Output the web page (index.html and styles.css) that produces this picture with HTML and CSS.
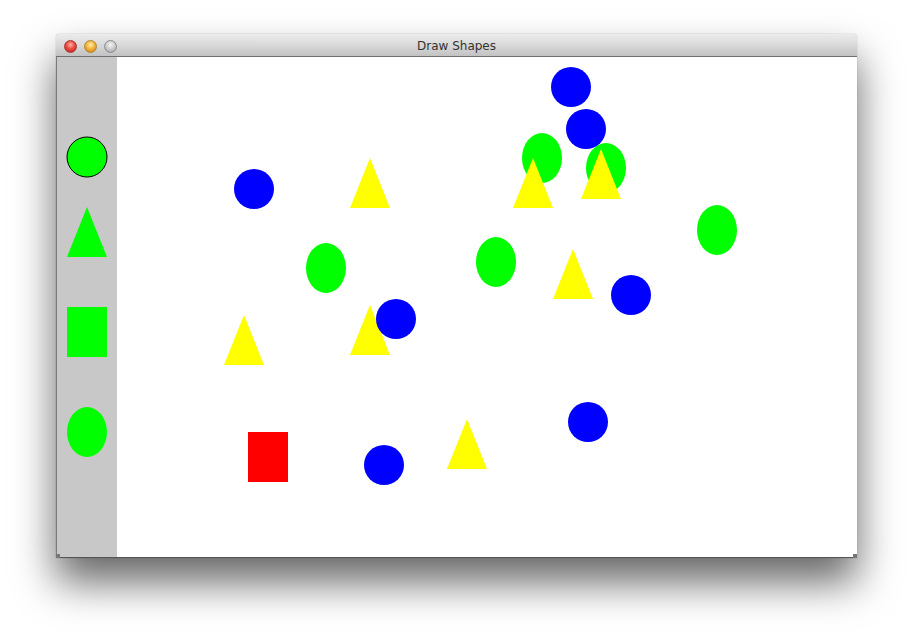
FILE: index.html
```html
<!DOCTYPE html>
<html>
<head>
<meta charset="utf-8">
<title>Draw Shapes</title>
<link rel="stylesheet" href="styles.css">
</head>
<body>
<div class="window">
  <div class="titlebar">
    <div class="lights">
      <span class="light red"></span>
      <span class="light yellow"></span>
      <span class="light gray"></span>
    </div>
    <div class="title">Draw Shapes</div>
  </div>
  <div class="content">
    <div class="sidebar">
      <svg class="palette" width="60" height="500" viewBox="0 0 60 500">
        <circle cx="30" cy="100" r="20" fill="#00ff00" stroke="#000" stroke-width="1"/>
        <polygon points="30,150 10,200 50,200" fill="#00ff00"/>
        <rect x="10" y="250" width="40" height="50" fill="#00ff00"/>
        <ellipse cx="30" cy="375" rx="20" ry="25" fill="#00ff00"/>
      </svg>
    </div>
    <div class="canvas">
      <svg width="740" height="500" viewBox="0 0 740 500">
        <g fill="#00ff00">
          <ellipse cx="425" cy="101" rx="20" ry="25"/>
          <ellipse cx="489" cy="111" rx="20" ry="25"/>
          <ellipse cx="209" cy="211" rx="20" ry="25"/>
          <ellipse cx="379" cy="205" rx="20" ry="25"/>
          <ellipse cx="600" cy="173" rx="20" ry="25"/>
        </g>
        <rect x="131" y="375" width="40" height="50" fill="#ff0000"/>
        <g fill="#ffff00">
          <polygon points="416,101 396,151 436,151"/>
          <polygon points="484,92 464,142 504,142"/>
          <polygon points="253,101 233,151 273,151"/>
          <polygon points="456,192 436,242 476,242"/>
          <polygon points="127,258 107,308 147,308"/>
          <polygon points="253,248 233,298 273,298"/>
          <polygon points="350,362 330,412 370,412"/>
        </g>
        <g fill="#0000ff">
          <circle cx="454" cy="30" r="20"/>
          <circle cx="469" cy="72" r="20"/>
          <circle cx="137" cy="132" r="20"/>
          <circle cx="279" cy="262" r="20"/>
          <circle cx="514" cy="238" r="20"/>
          <circle cx="267" cy="408" r="20"/>
          <circle cx="471" cy="365" r="20"/>
        </g>
      </svg>
    </div>
    <span class="corner left"></span>
    <span class="corner right"></span>
  </div>
</div>
</body>
</html>
```
FILE: styles.css
```css
html, body {
  margin: 0;
  padding: 0;
  background: #ffffff;
  width: 914px;
  height: 636px;
  overflow: hidden;
}
body {
  padding: 34px 0 0 56px;
  box-sizing: border-box;
}
.window {
  width: 801px;
  display: flex;
  flex-direction: column;
  border-radius: 4px 4px 0 0;
  box-shadow: 0 24px 42px rgba(0,0,0,0.6), 0 0 1px rgba(0,0,0,0.5);
  background: #fff;
}
.titlebar {
  position: relative;
  height: 23px;
  box-sizing: border-box;
  border-bottom: 1px solid #6f6f6f;
  border-radius: 4px 4px 0 0;
  background: linear-gradient(to bottom, #ececec 0%, #d9d9d9 50%, #c2c2c2 100%);
  display: flex;
  align-items: center;
  justify-content: center;
}
.lights {
  position: absolute;
  left: 8px;
  top: 6px;
  display: flex;
  gap: 7px;
}
.light {
  width: 13px;
  height: 13px;
  border-radius: 50%;
  box-sizing: border-box;
}
.light.red {
  background: radial-gradient(circle at 50% 35%, #ffb2a8 0%, #ee4a42 45%, #b31f1a 100%);
  border: 1px solid #a33a33;
}
.light.yellow {
  background: radial-gradient(circle at 50% 35%, #fff0b0 0%, #f6b53b 45%, #c27a10 100%);
  border: 1px solid #b2852d;
}
.light.gray {
  background: radial-gradient(circle at 50% 35%, #f4f4f4 0%, #cfcfcf 45%, #9a9a9a 100%);
  border: 1px solid #8e8e8e;
}
.title {
  font-family: "DejaVu Sans", "Liberation Sans", sans-serif;
  font-size: 12px;
  color: #333;
  line-height: 22px;
  padding-top: 1px;
}
.content {
  position: relative;
  display: flex;
  height: 501px;
  box-sizing: border-box;
  border-left: 1px solid #7a7a7a;
  border-bottom: 1px solid #555;
}
.sidebar {
  width: 60px;
  height: 500px;
  background: #c8c8c8;
}
.canvas {
  width: 740px;
  height: 500px;
  background: #fff;
}
svg { display: block; }
.corner {
  position: absolute;
  bottom: -1px;
  width: 4px;
  height: 4px;
  background: #777;
}
.corner.left { left: -1px; }
.corner.right { right: 0; }
```
